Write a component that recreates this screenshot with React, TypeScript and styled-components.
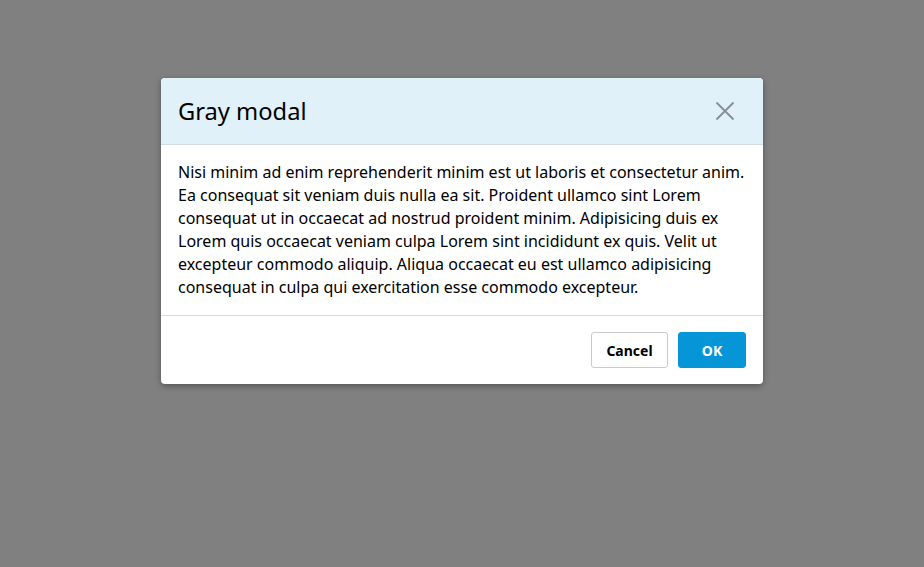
import React from "react";
import styled, { createGlobalStyle } from "styled-components";

const Global = createGlobalStyle`
  html, body { margin: 0; padding: 0; }
  body {
    background: #808080;
    font-family: "Noto Sans", "Open Sans", sans-serif;
    width: 924px;
    height: 567px;
    overflow: hidden;
  }
`;

const Page = styled.div`
  display: flex;
  justify-content: center;
  padding-top: 78px;
  width: 924px;
  height: 567px;
  box-sizing: border-box;
`;

const Modal = styled.div`
  width: 602px;
  background: #ffffff;
  border-radius: 4px;
  box-shadow: 0 2px 6px rgba(0, 0, 0, 0.35);
  overflow: hidden;
  align-self: flex-start;
`;

const Header = styled.div`
  display: flex;
  align-items: center;
  justify-content: space-between;
  height: 66px;
  padding: 0 23px 0 17px;
  background: #e1f1fa;
  border-bottom: 1px solid #d4dbe1;
`;

const Title = styled.h2`
  margin: 0;
  font-size: 23.7px;
  font-weight: 400;
  color: #000;
`;

const CloseButton = styled.button`
  display: flex;
  align-items: center;
  justify-content: center;
  width: 30px;
  height: 30px;
  padding: 0;
  border: none;
  background: transparent;
  cursor: pointer;
`;

const Body = styled.div`
  padding: 16px 17px;
  font-size: 16px;
  line-height: 23px;
  color: #000;
  border-bottom: 1px solid #dcdcdc;
`;

const Footer = styled.div`
  display: flex;
  justify-content: flex-end;
  gap: 10px;
  padding: 16px 17px;
`;

const Button = styled.button<{ $primary?: boolean }>`
  height: 36px;
  padding: 0;
  border-radius: 3px;
  font-family: "Noto Sans", sans-serif;
  font-size: 14px;
  font-weight: 700;
  cursor: pointer;
  width: ${(p) => (p.$primary ? "68px" : "77px")};
  border: 1px solid ${(p) => (p.$primary ? "#0696d7" : "#c8cbce")};
  background: ${(p) => (p.$primary ? "#0696d7" : "#ffffff")};
  color: ${(p) => (p.$primary ? "#ffffff" : "#000000")};
`;

export default function App() {
  return (
    <>
      <Global />
      <Page>
        <Modal>
          <Header>
            <Title>Gray modal</Title>
            <CloseButton aria-label="Close">
              <svg width="18" height="18" viewBox="0 0 18 18">
                <path d="M0.5 0.5 L17.5 17.5 M17.5 0.5 L0.5 17.5" stroke="#8a9096" strokeWidth="2" />
              </svg>
            </CloseButton>
          </Header>
          <Body>
            Nisi minim ad enim reprehenderit minim est ut laboris et consectetur anim. Ea consequat sit
            veniam duis nulla ea sit. Proident ullamco sint Lorem consequat ut in occaecat ad nostrud
            proident minim. Adipisicing duis ex Lorem quis occaecat veniam culpa Lorem sint incididunt ex
            quis. Velit ut excepteur commodo aliquip. Aliqua occaecat eu est ullamco adipisicing consequat
            in culpa qui exercitation esse commodo excepteur.
          </Body>
          <Footer>
            <Button>Cancel</Button>
            <Button $primary>OK</Button>
          </Footer>
        </Modal>
      </Page>
    </>
  );
}
